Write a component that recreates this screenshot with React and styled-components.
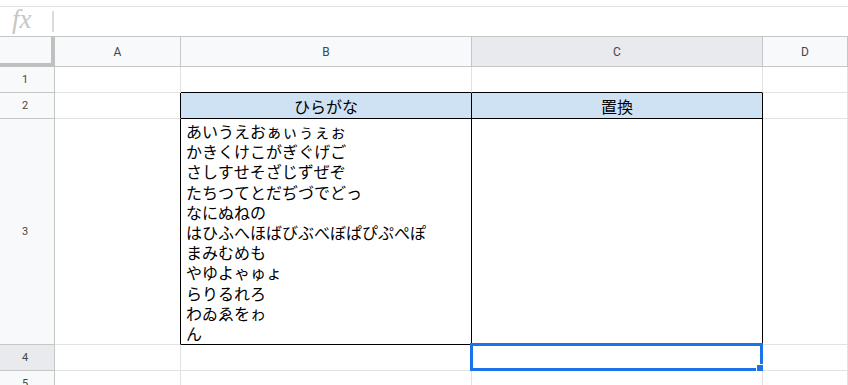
import React from "react";
import styled, { createGlobalStyle } from "styled-components";

const GlobalStyle = createGlobalStyle`
  html, body {
    margin: 0;
    padding: 0;
    background: #fff;
    overflow: hidden;
  }
  body {
    font-family: Roboto, "Liberation Sans", Arial, sans-serif;
  }
`;

const GRID_LINE = "#e2e2e2";
const HEAD_LINE = "#c4c7c5";
const BLACK = "#000";

const Page = styled.div`
  width: 848px;
  height: 385px;
  overflow: hidden;
`;

const FormulaBar = styled.div`
  margin-top: 6px;
  height: 29px;
  border-top: 1px solid #e1e1e1;
  border-bottom: 1px solid ${HEAD_LINE};
  display: flex;
  align-items: center;
`;

const FxLabel = styled.span`
  width: 52px;
  padding-left: 12px;
  box-sizing: border-box;
  font-family: "Liberation Serif", "DejaVu Serif", serif;
  font-style: italic;
  font-size: 27px;
  color: #c6c6c6;
  line-height: 1;
  margin-top: -5px;
`;

const Divider = styled.span`
  width: 2px;
  height: 21px;
  background: #dadce0;
`;

const Sheet = styled.div`
  display: grid;
  grid-template-columns: 55px 126px 291px 291px 1fr;
  grid-template-rows: 30px 26px 26px 226px 26px 26px;
`;

const Corner = styled.div`
  box-sizing: border-box;
  background: #f8f9fa;
  border-right: 4px solid #c0c0c0;
  border-bottom: 4px solid #c0c0c0;
`;

const ColHeader = styled.div`
  box-sizing: border-box;
  background: ${(p) => (p.$active ? "#e8eaed" : "#f8f9fa")};
  border-right: 1px solid ${HEAD_LINE};
  border-bottom: 1px solid ${HEAD_LINE};
  display: flex;
  align-items: center;
  justify-content: center;
  font-size: 12px;
  color: #444746;
`;

const RowHeader = styled.div`
  box-sizing: border-box;
  background: ${(p) => (p.$active ? "#e8eaed" : "#f8f9fa")};
  border-right: 1px solid ${HEAD_LINE};
  border-bottom: 1px solid ${HEAD_LINE};
  display: flex;
  align-items: center;
  justify-content: center;
  padding-right: 4px;
  font-size: 11px;
  color: #444746;
`;

const Cell = styled.div`
  position: relative;
  box-sizing: border-box;
  background: ${(p) => p.$bg || "#fff"};
  border-right: 1px solid ${(p) => p.$right || GRID_LINE};
  border-bottom: 1px solid ${(p) => p.$bottom || GRID_LINE};
  font-family: "Noto Sans CJK JP", "Liberation Sans", sans-serif;
  font-size: 16px;
  color: #000;
  display: flex;
  align-items: center;
  justify-content: ${(p) => (p.$center ? "center" : "flex-start")};
`;

const Lines = styled.div`
  align-self: flex-start;
  padding: 2px 0 0 5px;
  line-height: 20.2px;
  white-space: pre;
`;

const Selection = styled.div`
  position: absolute;
  left: -2px;
  top: -2px;
  width: 293px;
  height: 28px;
  box-sizing: border-box;
  border: 3px solid #1a73e8;
  pointer-events: none;
`;

const FillHandle = styled.div`
  position: absolute;
  left: 284px;
  top: 19px;
  width: 7px;
  height: 7px;
  background: #1a73e8;
  border: 1px solid #fff;
`;

const hiragana = [
  "あいうえおぁぃぅぇぉ",
  "かきくけこがぎぐげご",
  "さしすせそざじずぜぞ",
  "たちつてとだぢづでどっ",
  "なにぬねの",
  "はひふへほばびぶべぼぱぴぷぺぽ",
  "まみむめも",
  "やゆよゃゅょ",
  "らりるれろ",
  "わゐゑをゎ",
  "ん",
];

export default function App() {
  return (
    <Page>
      <GlobalStyle />
      <FormulaBar>
        <FxLabel>fx</FxLabel>
        <Divider />
      </FormulaBar>
      <Sheet>
        <Corner />
        <ColHeader>A</ColHeader>
        <ColHeader>B</ColHeader>
        <ColHeader $active>C</ColHeader>
        <ColHeader>D</ColHeader>

        <RowHeader>1</RowHeader>
        <Cell />
        <Cell $bottom={BLACK} />
        <Cell $bottom={BLACK} />
        <Cell />

        <RowHeader>2</RowHeader>
        <Cell $right={BLACK} />
        <Cell $bg="#cfe2f3" $right={BLACK} $bottom={BLACK} $center>
          ひらがな
        </Cell>
        <Cell $bg="#cfe2f3" $right={BLACK} $bottom={BLACK} $center>
          置換
        </Cell>
        <Cell />

        <RowHeader>3</RowHeader>
        <Cell $right={BLACK} />
        <Cell $right={BLACK} $bottom={BLACK}>
          <Lines>{hiragana.join("\n")}</Lines>
        </Cell>
        <Cell $right={BLACK} $bottom={BLACK} />
        <Cell />

        <RowHeader $active>4</RowHeader>
        <Cell />
        <Cell />
        <Cell>
          <Selection />
          <FillHandle />
        </Cell>
        <Cell />

        <RowHeader>5</RowHeader>
        <Cell />
        <Cell />
        <Cell />
        <Cell />
      </Sheet>
    </Page>
  );
}
